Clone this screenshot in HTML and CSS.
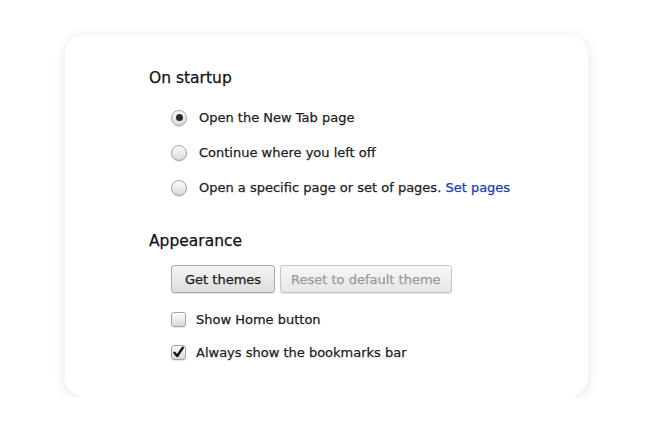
FILE: index.html
```html
<!DOCTYPE html>
<html lang="en">
<head>
  <meta charset="UTF-8" />
  <meta name="viewport" content="width=device-width, initial-scale=1.0"/>
  <title>Settings</title>
  <link rel="stylesheet" href="styles.css">
</head>
<body>
  <main class="settings-card">
    <section class="settings-section">
      <h2>On startup</h2>
      <ul class="radio-list">
        <li><span class="radio checked"></span><span>Open the New Tab page</span></li>
        <li><span class="radio"></span><span>Continue where you left off</span></li>
        <li><span class="radio"></span><span>Open a specific page or set of pages. <a href="#" class="link">Set pages</a></span></li>
      </ul>
    </section>

    <section class="settings-section appearance">
      <h2>Appearance</h2>
      <div class="button-row">
        <button type="button" class="btn">Get themes</button>
        <button type="button" class="btn" disabled>Reset to default theme</button>
      </div>
      <ul class="check-list">
        <li><span class="checkbox"></span><span>Show Home button</span></li>
        <li>
          <span class="checkbox">
            <svg viewBox="0 0 15 15" width="15" height="15">
              <path d="M3.4 7.8 L6.2 11 L11.8 2.8" fill="none" stroke="#111" stroke-width="2.4" stroke-linecap="round" stroke-linejoin="round"/>
            </svg>
          </span>
          <span>Always show the bookmarks bar</span>
        </li>
      </ul>
    </section>
  </main>
</body>
</html>
```

FILE: styles.css
```css
body {
  margin: 0;
  padding: 0;
  background-color: #ffffff;
  font-family: "DejaVu Sans", "Liberation Sans", sans-serif;
  color: #1c1c1c;
  -webkit-text-stroke: 0.25px;
}

.settings-card {
  box-sizing: border-box;
  width: 523px;
  height: 362px;
  margin: 35px 0 0 65px;
  padding: 33px 0 0 84px;
  background-color: #ffffff;
  border-radius: 20px;
  box-shadow: 0 2px 14px rgba(0, 0, 0, 0.1);
}

.settings-section h2 {
  margin: 0;
  font-size: 15.5px;
  font-weight: normal;
  line-height: 20px;
  color: #111111;
}

.appearance {
  margin-top: 26px;
}

.radio-list,
.check-list {
  list-style: none;
  margin: 0;
  padding: 0 0 0 22px;
  font-size: 13px;
}

.radio-list {
  margin-top: 12px;
}

.radio-list li {
  display: flex;
  align-items: center;
  gap: 12px;
  height: 35px;
}

.radio {
  box-sizing: border-box;
  width: 16px;
  height: 16px;
  border: 1px solid #a3a3a3;
  border-radius: 50%;
  background: linear-gradient(#fdfdfd, #d9d9d9);
  box-shadow: 0 1px 1px rgba(0, 0, 0, 0.12);
  display: flex;
  align-items: center;
  justify-content: center;
}

.radio.checked::after {
  content: "";
  width: 7px;
  height: 7px;
  border-radius: 50%;
  background-color: #2a2a2a;
}

.link {
  color: #1c3aa9;
  text-decoration: none;
}

.button-row {
  display: flex;
  gap: 5px;
  margin: 14px 0 0 22px;
}

.btn {
  height: 28px;
  padding: 0 13px;
  font-family: inherit;
  font-size: 13px;
  white-space: nowrap;
  color: #1c1c1c;
  border: 1px solid #a9a9a9;
  border-radius: 3px;
  background: linear-gradient(#f4f4f4, #dedede);
  box-shadow: 0 1px 1px rgba(0, 0, 0, 0.1);
}

.btn:disabled {
  padding: 0 10px;
  color: #9a9a9a;
  border-color: #c6c6c6;
  background: linear-gradient(#f7f7f7, #e6e6e6);
}

.check-list {
  margin-top: 10px;
}

.check-list li {
  display: flex;
  align-items: center;
  gap: 10px;
  height: 33px;
}

.checkbox {
  box-sizing: border-box;
  position: relative;
  width: 15px;
  height: 15px;
  border: 1px solid #a3a3a3;
  border-radius: 3px;
  background: linear-gradient(#fdfdfd, #d9d9d9);
  box-shadow: 0 1px 1px rgba(0, 0, 0, 0.1);
}

.checkbox svg {
  position: absolute;
  left: -1px;
  top: -1px;
}
```
